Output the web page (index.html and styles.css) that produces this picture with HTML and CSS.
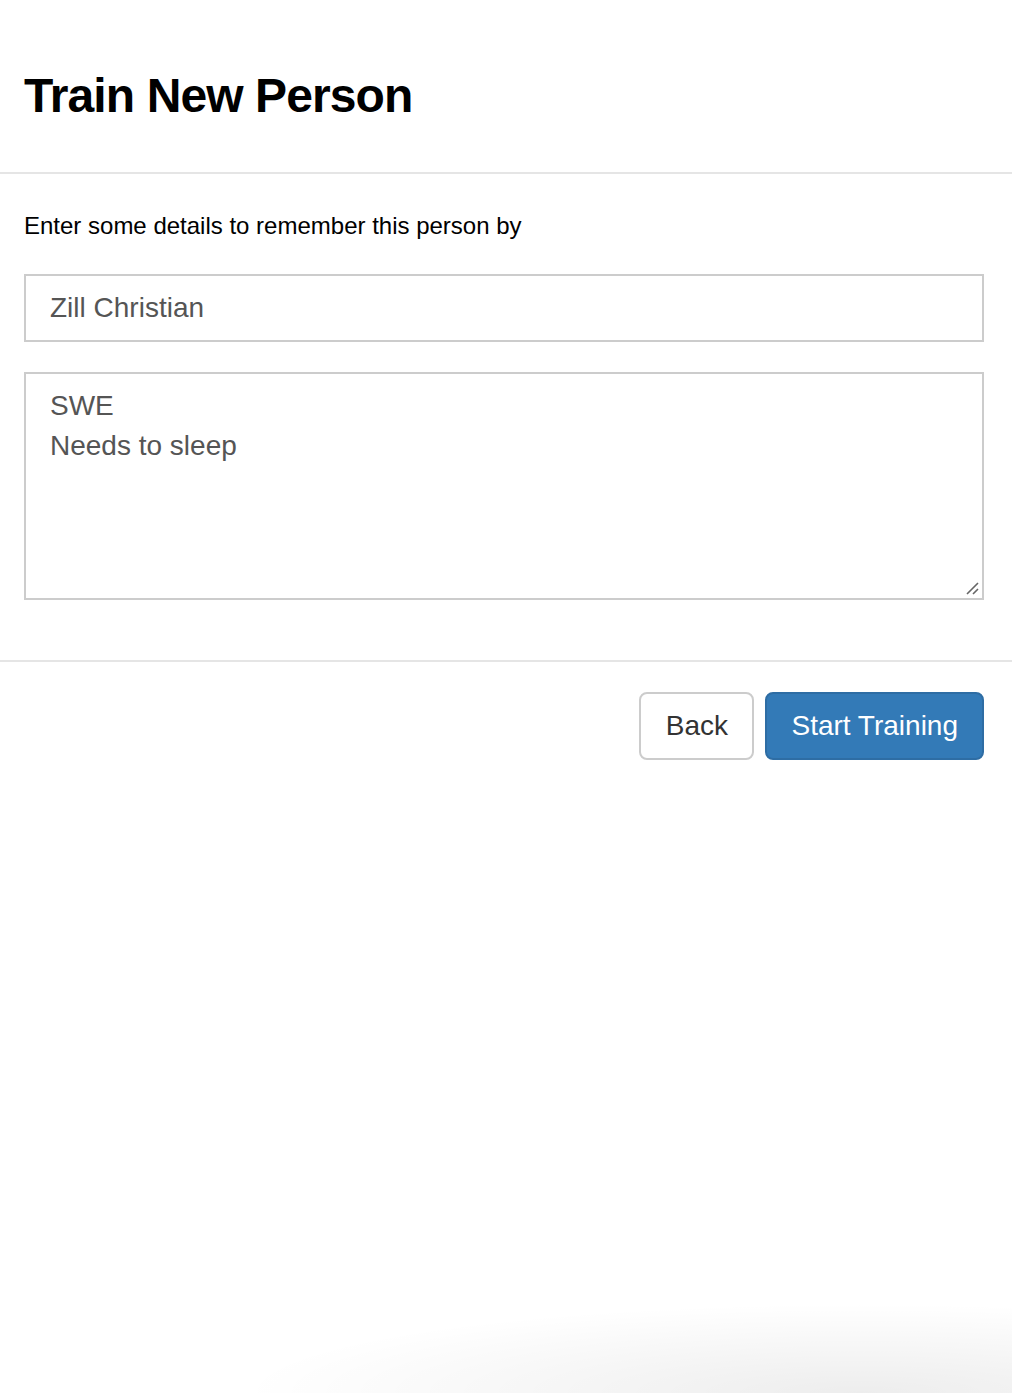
FILE: index.html
```html
<!DOCTYPE html>
<html lang="en">
<head>
<meta charset="utf-8">
<title>Train New Person</title>
<link rel="stylesheet" href="styles.css">
</head>
<body>
<div class="modal">
  <header class="modal-header">
    <h1 class="modal-title">Train New Person</h1>
  </header>
  <section class="modal-body">
    <p class="hint">Enter some details to remember this person by</p>
    <div class="field">Zill Christian</div>
    <div class="field area">
      <div>SWE</div>
      <div>Needs to sleep</div>
      <svg class="grip" width="16" height="16" viewBox="0 0 16 16" aria-hidden="true">
        <path d="M14 3 L3 14 M14 9 L9 14" stroke="#666" stroke-width="1.6" fill="none"/>
      </svg>
    </div>
  </section>
  <footer class="modal-footer">
    <button class="btn btn-default">Back</button>
    <button class="btn btn-primary">Start Training</button>
  </footer>
</div>
</body>
</html>
```

FILE: styles.css
```css
html, body {
  margin: 0;
  padding: 0;
}
body {
  min-height: 1393px;
  font-family: "Liberation Sans", Arial, sans-serif;
  color: #000;
  background:
    radial-gradient(ellipse 620px 90px at 85% 100%, rgba(0,0,0,0.07), rgba(0,0,0,0) 100%) no-repeat,
    #fff;
}
.modal {
  width: 1012px;
}
.modal-header {
  padding: 70px 28px 0 24px;
  height: 102px;
  border-bottom: 2px solid #e5e5e5;
  box-sizing: content-box;
}
.modal-title {
  margin: 0;
  font-size: 48px;
  line-height: 1.1;
  font-weight: bold;
  letter-spacing: -0.9px;
}
.modal-body {
  padding: 35px 28px 60px 24px;
}
.hint {
  margin: 0 0 31px;
  font-size: 24px;
  line-height: 34px;
}
.field {
  box-sizing: border-box;
  border: 2px solid #ccc;
  padding: 12px 24px;
  font-size: 28px;
  line-height: 40px;
  color: #555;
  height: 68px;
  background: #fff;
}
.field.area {
  position: relative;
  margin-top: 30px;
  height: 228px;
}
.grip {
  position: absolute;
  right: 2px;
  bottom: 2px;
}
.modal-footer {
  border-top: 2px solid #e5e5e5;
  padding: 30px 28px 30px 24px;
  display: flex;
  justify-content: flex-end;
  gap: 11px;
}
.btn {
  box-sizing: border-box;
  height: 68px;
  padding: 0 24px;
  font-family: "Liberation Sans", Arial, sans-serif;
  font-size: 28px;
  line-height: 40px;
  border: 2px solid;
  border-radius: 8px;
  cursor: pointer;
}
.btn-default {
  min-width: 115px;
  background: #fff;
  border-color: #ccc;
  color: #333;
}
.btn-primary {
  min-width: 218px;
  background: #337ab7;
  border-color: #2e6da4;
  color: #fff;
}
```
